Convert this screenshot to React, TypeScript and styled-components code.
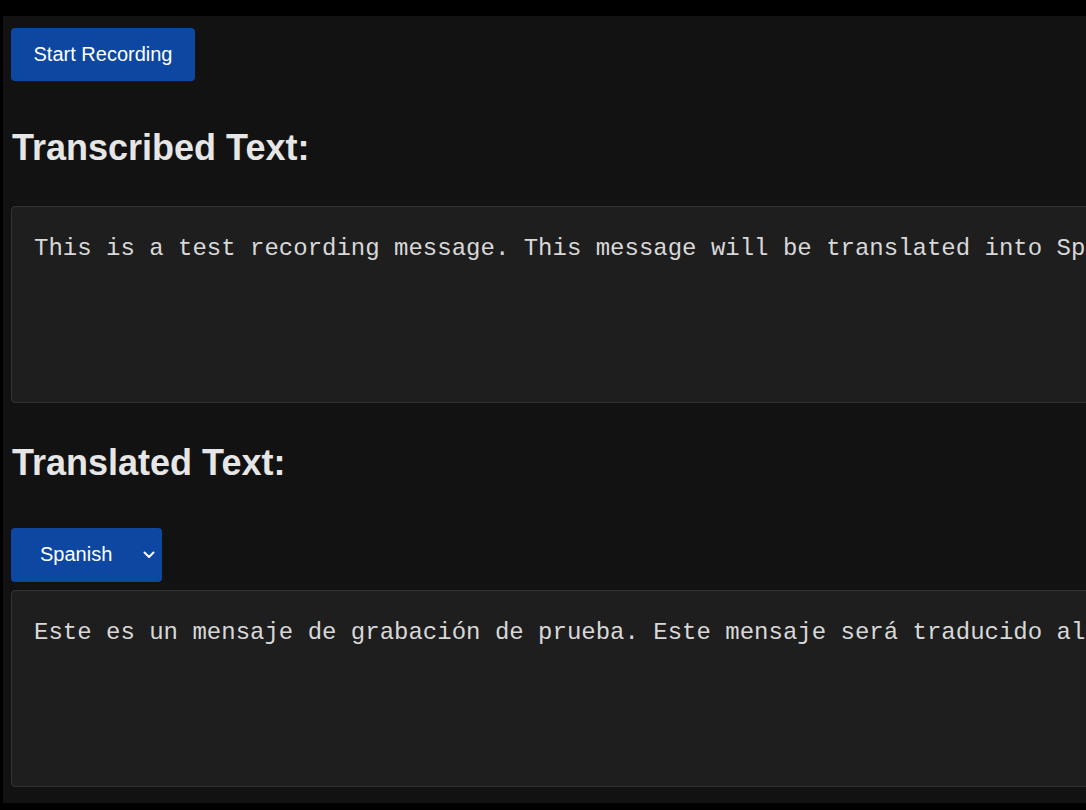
import React, { useState } from "react";
import styled, { createGlobalStyle } from "styled-components";

const GlobalStyle = createGlobalStyle`
  html, body {
    margin: 0;
    padding: 0;
    background: #000000;
    overflow: hidden;
  }
  body {
    font-family: "Liberation Sans", Arial, sans-serif;
  }
  #root {
    padding: 16px 0 7px 3px;
  }
`;

const Page = styled.main`
  background: #121212;
  color: #e0e0e0;
  padding: 12px 8px 16px 8px;
  display: flex;
  flex-direction: column;
  align-items: flex-start;
  box-sizing: border-box;
  height: 787px;
`;

const RecordButton = styled.button`
  font-family: "Liberation Sans", Arial, sans-serif;
  font-size: 20px;
  line-height: 23px;
  color: #ffffff;
  background: #0d47a1;
  border: none;
  border-radius: 4px;
  padding: 15px 22px;
  width: 184px;
  cursor: pointer;
`;

const Heading = styled.h2<{ $top: number; $bottom: number }>`
  font-family: "Liberation Sans", Arial, sans-serif;
  font-size: 36px;
  font-weight: 700;
  color: #e6e6e6;
  margin: ${(p) => p.$top}px 0 ${(p) => p.$bottom}px 1px;
  line-height: normal;
`;

const TextBox = styled.textarea`
  font-family: "Liberation Mono", "Courier New", monospace;
  font-size: 24px;
  line-height: 1.5;
  color: #d8d8d8;
  background: #1e1e1e;
  border: 1px solid #333333;
  border-radius: 4px;
  padding: 24px 22px;
  width: 1300px;
  height: 197px;
  box-sizing: border-box;
  resize: none;
  white-space: pre;
  overflow: hidden;
  outline: none;
  flex-shrink: 0;
`;

const SelectWrap = styled.div`
  position: relative;
  margin-bottom: 8px;
`;

const LangSelect = styled.select`
  appearance: none;
  -webkit-appearance: none;
  font-family: "Liberation Sans", Arial, sans-serif;
  font-size: 20px;
  line-height: 23px;
  color: #ffffff;
  background: #0d47a1;
  border: none;
  border-radius: 4px;
  padding: 15px 50px 16px 29px;
  width: 151px;
  outline: none;
  cursor: pointer;
`;

const Chevron = styled.svg`
  position: absolute;
  right: 7px;
  top: 50%;
  transform: translateY(-50%);
  pointer-events: none;
`;

export default function App() {
  const [lang, setLang] = useState("es");
  return (
    <>
      <GlobalStyle />
      <Page>
        <RecordButton>Start Recording</RecordButton>
        <Heading $top={46} $bottom={37}>Transcribed Text:</Heading>
        <TextBox
          readOnly
          wrap="off"
          value="This is a test recording message. This message will be translated into Spanish."
        />
        <Heading $top={39} $bottom={44}>Translated Text:</Heading>
        <SelectWrap>
          <LangSelect value={lang} onChange={(e) => setLang(e.target.value)}>
            <option value="es">Spanish</option>
            <option value="fr">French</option>
            <option value="de">German</option>
          </LangSelect>
          <Chevron width="12" height="8" viewBox="0 0 12 8" fill="none">
            <path d="M1.5 1.5 L6 6 L10.5 1.5" stroke="#ffffff" strokeWidth="2" strokeLinecap="round" strokeLinejoin="round" />
          </Chevron>
        </SelectWrap>
        <TextBox
          readOnly
          wrap="off"
          value="Este es un mensaje de grabación de prueba. Este mensaje será traducido al español."
        />
      </Page>
    </>
  );
}
